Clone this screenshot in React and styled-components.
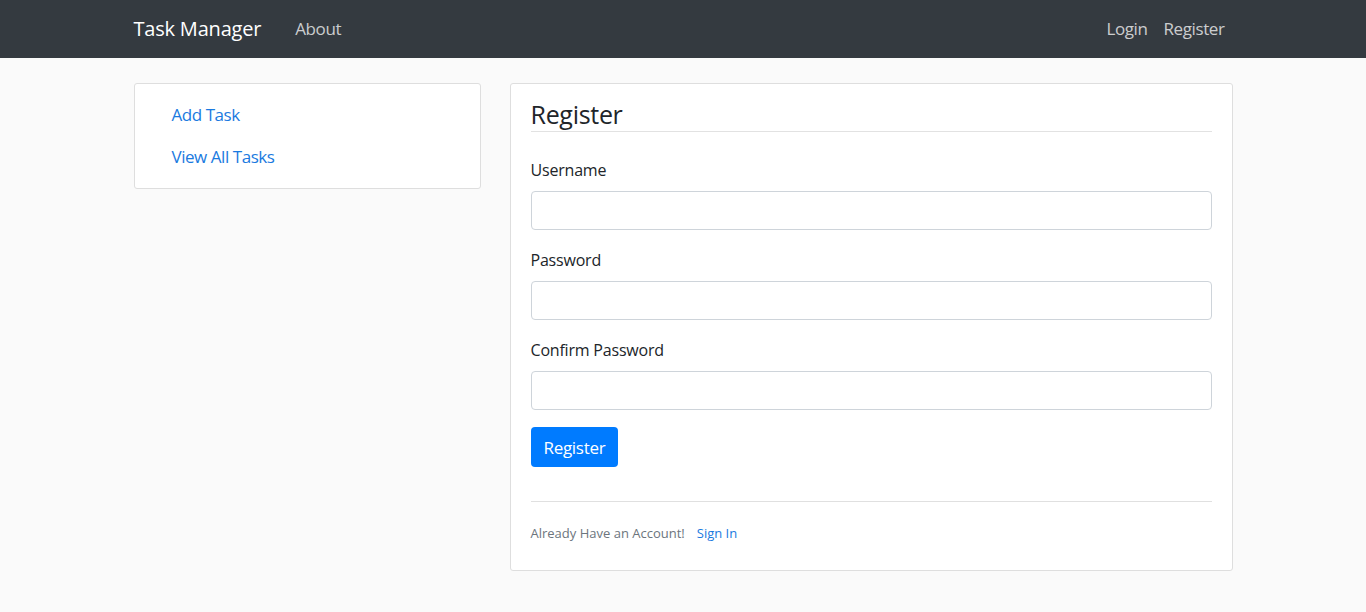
import React from "react";
import styled, { createGlobalStyle } from "styled-components";

const GlobalStyle = createGlobalStyle`
  * {
    box-sizing: border-box;
  }

  body {
    margin: 0;
    background: #fafafa;
    color: #212529;
    font-family: "Open Sans", "Noto Sans", sans-serif;
    font-size: 16px;
  }

  a {
    text-decoration: none;
  }
`;

const Container = styled.div`
  width: 1099px;
  margin: 0 auto;
`;

const Navbar = styled.nav`
  height: 58px;
  background: #343a40;

  ${Container} {
    height: 100%;
    display: flex;
    align-items: center;
  }
`;

const Brand = styled.a`
  color: #fff;
  font-size: 20px;
  line-height: 30px;
  margin-right: 26px;
  letter-spacing: -0.2px;
`;

const NavList = styled.div`
  display: flex;
  align-items: center;
  margin-left: ${({ $right }) => ($right ? "auto" : "0")};
`;

const NavItem = styled.a`
  color: rgba(255, 255, 255, 0.75);
  font-size: 17px;
  line-height: 26px;
  padding: 0 8px;
  letter-spacing: -0.4px;
`;

const Main = styled(Container)`
  display: flex;
  align-items: flex-start;
  gap: 29px;
  padding-top: 25px;
`;

const Card = styled.div`
  background: #fff;
  border: 1px solid #dedede;
  border-radius: 3px;
`;

const Sidebar = styled(Card)`
  width: 347px;
  padding: 18px 0 18px 37px;
  display: flex;
  flex-direction: column;
  gap: 16px;
`;

const SideLink = styled.a`
  color: #1a7ae0;
  font-size: 17px;
  line-height: 26px;
  letter-spacing: -0.45px;
`;

const FormCard = styled(Card)`
  width: 723px;
  padding: 20px 20px 27px;
`;

const Title = styled.h2`
  margin: 0 0 25px;
  padding-bottom: 7px;
  font-size: 25px;
  font-weight: 400;
  line-height: 20px;
  border-bottom: 1px solid #e2e2e2;
  letter-spacing: -0.3px;
`;

const Group = styled.div`
  margin-bottom: 17px;
`;

const Label = styled.label`
  display: block;
  font-size: 16px;
  line-height: 26px;
  margin-bottom: 8px;
  letter-spacing: -0.2px;
`;

const Input = styled.input`
  display: block;
  width: 100%;
  height: 39px;
  border: 1px solid #ced4da;
  border-radius: 4px;
  background: #fff;
  padding: 6px 12px;
  font: inherit;
  outline: none;
`;

const Button = styled.button`
  height: 40px;
  padding: 0 13px;
  border: none;
  border-radius: 4px;
  background: #007bff;
  color: #fff;
  font-family: inherit;
  font-size: 17px;
  letter-spacing: -0.3px;
  cursor: pointer;
`;

const Divider = styled.hr`
  border: none;
  border-top: 1px solid #e0e0e0;
  margin: 34px 0 21px;
`;

const Footer = styled.div`
  display: flex;
  align-items: center;
  gap: 12px;
  font-size: 13px;
  line-height: 20px;
  color: #6c757d;
`;

const FooterLink = styled.a`
  color: #1a7ae0;
`;

export default function App() {
  return (
    <>
      <GlobalStyle />
      <Navbar>
        <Container>
          <Brand href="#">Task Manager</Brand>
          <NavList>
            <NavItem href="#">About</NavItem>
          </NavList>
          <NavList $right>
            <NavItem href="#">Login</NavItem>
            <NavItem href="#">Register</NavItem>
          </NavList>
        </Container>
      </Navbar>

      <Main>
        <Sidebar>
          <SideLink href="#">Add Task</SideLink>
          <SideLink href="#">View All Tasks</SideLink>
        </Sidebar>

        <FormCard>
          <Title>Register</Title>
          <form onSubmit={(e) => e.preventDefault()}>
            <Group>
              <Label htmlFor="username">Username</Label>
              <Input id="username" type="text" />
            </Group>
            <Group>
              <Label htmlFor="password">Password</Label>
              <Input id="password" type="password" />
            </Group>
            <Group>
              <Label htmlFor="confirm">Confirm Password</Label>
              <Input id="confirm" type="password" />
            </Group>
            <Button type="submit">Register</Button>
          </form>
          <Divider />
          <Footer>
            <span>Already Have an Account!</span>
            <FooterLink href="#">Sign In</FooterLink>
          </Footer>
        </FormCard>
      </Main>
    </>
  );
}
